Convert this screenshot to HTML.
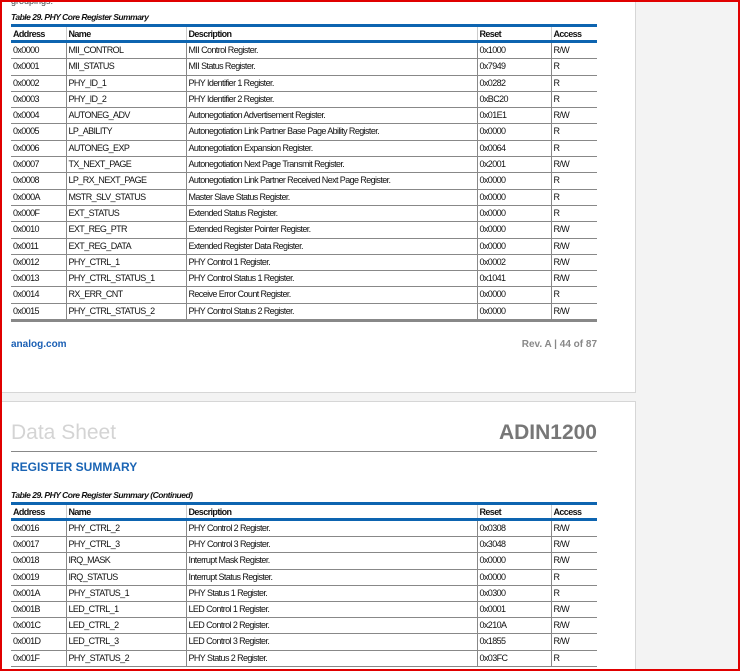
<!DOCTYPE html>
<html style="width:740px;height:671px;overflow:hidden"><head><style>
*{margin:0;padding:0;box-sizing:border-box}
body{width:740px;height:671px;overflow:hidden;background:#f3f3f3;position:relative;font-family:"Liberation Sans",sans-serif}
.page{position:absolute;left:2px;width:634px;background:#fff;border-right:1px solid #d6d6d6;border-bottom:1px solid #d6d6d6}
.frame{position:absolute;left:0;top:0;width:740px;height:671px;border:2px solid #e00000;pointer-events:none}
table{position:absolute;left:11px;width:586px;border-collapse:collapse;font-size:9px;letter-spacing:-0.6px;color:#111;table-layout:fixed}
td,th{text-align:left;padding:0 0 0 2px;white-space:nowrap;overflow:hidden}
th{font-weight:bold;height:16px;border-top:3px solid #0d64b0;border-bottom:3px solid #0d64b0}
td{border-bottom:1px solid #888;border-left:1px solid #888}
td:first-child{border-left:none}
th+th{border-left:1px solid #ccc}
.cap{position:absolute;left:11px;font-size:8.5px;letter-spacing:-0.5px;font-style:italic;font-weight:bold;color:#111}
</style></head><body>
<div class="page" style="top:0;height:393px"></div>
<div class="page" style="top:401px;height:280px;border-top:1px solid #d6d6d6"></div>
<div style="position:absolute;left:11px;top:-4px;font-size:9px;color:#444">groupings.</div>
<div class="cap" style="top:12px">Table 29. PHY Core Register Summary</div>
<table style="top:24px">
<colgroup><col style="width:55px"><col style="width:120px"><col style="width:291px"><col style="width:74px"><col style="width:46px"></colgroup>
<tr><th>Address</th><th>Name</th><th>Description</th><th>Reset</th><th>Access</th></tr>
<tbody style="line-height:15.3px">
<tr><td>0x0000</td><td>MII_CONTROL</td><td>MII Control Register.</td><td>0x1000</td><td>R/W</td></tr>
<tr><td>0x0001</td><td>MII_STATUS</td><td>MII Status Register.</td><td>0x7949</td><td>R</td></tr>
<tr><td>0x0002</td><td>PHY_ID_1</td><td>PHY Identifier 1 Register.</td><td>0x0282</td><td>R</td></tr>
<tr><td>0x0003</td><td>PHY_ID_2</td><td>PHY Identifier 2 Register.</td><td>0xBC20</td><td>R</td></tr>
<tr><td>0x0004</td><td>AUTONEG_ADV</td><td>Autonegotiation Advertisement Register.</td><td>0x01E1</td><td>R/W</td></tr>
<tr><td>0x0005</td><td>LP_ABILITY</td><td>Autonegotiation Link Partner Base Page Ability Register.</td><td>0x0000</td><td>R</td></tr>
<tr><td>0x0006</td><td>AUTONEG_EXP</td><td>Autonegotiation Expansion Register.</td><td>0x0064</td><td>R</td></tr>
<tr><td>0x0007</td><td>TX_NEXT_PAGE</td><td>Autonegotiation Next Page Transmit Register.</td><td>0x2001</td><td>R/W</td></tr>
<tr><td>0x0008</td><td>LP_RX_NEXT_PAGE</td><td>Autonegotiation Link Partner Received Next Page Register.</td><td>0x0000</td><td>R</td></tr>
<tr><td>0x000A</td><td>MSTR_SLV_STATUS</td><td>Master Slave Status Register.</td><td>0x0000</td><td>R</td></tr>
<tr><td>0x000F</td><td>EXT_STATUS</td><td>Extended Status Register.</td><td>0x0000</td><td>R</td></tr>
<tr><td>0x0010</td><td>EXT_REG_PTR</td><td>Extended Register Pointer Register.</td><td>0x0000</td><td>R/W</td></tr>
<tr><td>0x0011</td><td>EXT_REG_DATA</td><td>Extended Register Data Register.</td><td>0x0000</td><td>R/W</td></tr>
<tr><td>0x0012</td><td>PHY_CTRL_1</td><td>PHY Control 1 Register.</td><td>0x0002</td><td>R/W</td></tr>
<tr><td>0x0013</td><td>PHY_CTRL_STATUS_1</td><td>PHY Control Status 1 Register.</td><td>0x1041</td><td>R/W</td></tr>
<tr><td>0x0014</td><td>RX_ERR_CNT</td><td>Receive Error Count Register.</td><td>0x0000</td><td>R</td></tr>
<tr><td style="border-bottom:3px solid #888">0x0015</td><td style="border-bottom:3px solid #888">PHY_CTRL_STATUS_2</td><td style="border-bottom:3px solid #888">PHY Control Status 2 Register.</td><td style="border-bottom:3px solid #888">0x0000</td><td style="border-bottom:3px solid #888">R/W</td></tr>
</tbody></table>
<div style="position:absolute;left:11px;top:339px;font-size:10px;font-weight:bold;color:#1a5fb4">analog.com</div>
<div style="position:absolute;right:143px;top:339px;font-size:10px;font-weight:bold;color:#888">Rev. A | 44 of 87</div>
<div style="position:absolute;left:11px;top:421px;font-size:21px;color:#d4d4d4">Data Sheet</div>
<div style="position:absolute;right:143px;top:421px;font-size:21px;font-weight:bold;color:#777">ADIN1200</div>
<div style="position:absolute;left:11px;top:451px;width:586px;height:1px;background:#888"></div>
<div style="position:absolute;left:11px;top:460px;font-size:12px;font-weight:bold;color:#1a64b4">REGISTER SUMMARY</div>
<div class="cap" style="top:490px">Table 29. PHY Core Register Summary (Continued)</div>
<table style="top:502px">
<colgroup><col style="width:55px"><col style="width:120px"><col style="width:291px"><col style="width:74px"><col style="width:46px"></colgroup>
<tr><th>Address</th><th>Name</th><th>Description</th><th>Reset</th><th>Access</th></tr>
<tbody style="line-height:15.2px">
<tr><td>0x0016</td><td>PHY_CTRL_2</td><td>PHY Control 2 Register.</td><td>0x0308</td><td>R/W</td></tr>
<tr><td>0x0017</td><td>PHY_CTRL_3</td><td>PHY Control 3 Register.</td><td>0x3048</td><td>R/W</td></tr>
<tr><td>0x0018</td><td>IRQ_MASK</td><td>Interrupt Mask Register.</td><td>0x0000</td><td>R/W</td></tr>
<tr><td>0x0019</td><td>IRQ_STATUS</td><td>Interrupt Status Register.</td><td>0x0000</td><td>R</td></tr>
<tr><td>0x001A</td><td>PHY_STATUS_1</td><td>PHY Status 1 Register.</td><td>0x0300</td><td>R</td></tr>
<tr><td>0x001B</td><td>LED_CTRL_1</td><td>LED Control 1 Register.</td><td>0x0001</td><td>R/W</td></tr>
<tr><td>0x001C</td><td>LED_CTRL_2</td><td>LED Control 2 Register.</td><td>0x210A</td><td>R/W</td></tr>
<tr><td>0x001D</td><td>LED_CTRL_3</td><td>LED Control 3 Register.</td><td>0x1855</td><td>R/W</td></tr>
<tr><td>0x001F</td><td>PHY_STATUS_2</td><td>PHY Status 2 Register.</td><td>0x03FC</td><td>R</td></tr>
</tbody></table>
<div class="frame"></div>
</body></html>
